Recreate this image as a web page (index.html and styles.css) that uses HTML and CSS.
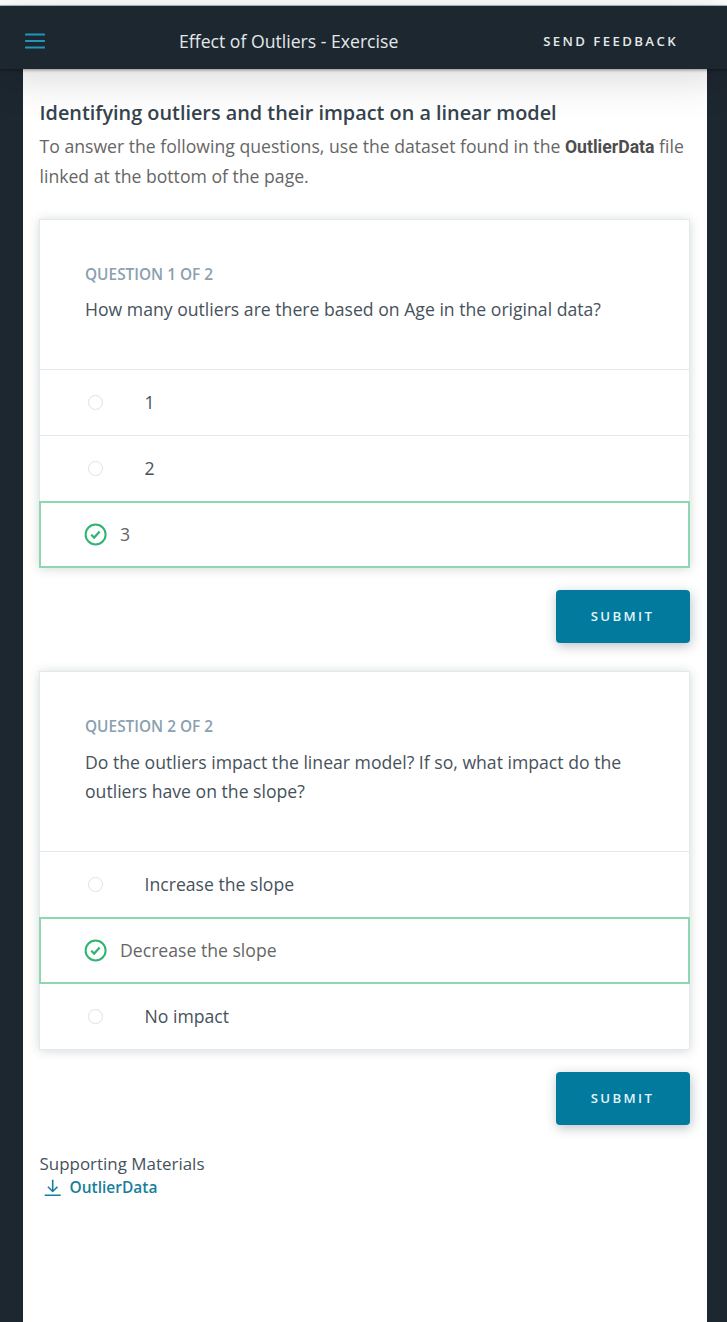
FILE: index.html
```html
<!DOCTYPE html>
<html lang="en">
<head>
<meta charset="utf-8">
<title>Effect of Outliers - Exercise</title>
<link rel="stylesheet" href="styles.css">
</head>
<body>
<header class="topbar">
  <svg class="menu" width="20" height="18" viewBox="0 0 20 18"><path d="M.8 2.5h18.4M.8 9h18.4M.8 15.5h18.4" stroke="#2495b8" stroke-width="2.2" stroke-linecap="round"/></svg>
  <h1 class="title">Effect of Outliers - Exercise</h1>
  <a class="feedback">SEND FEEDBACK</a>
</header>
<main class="page">
  <h2 class="heading">Identifying outliers and their impact on a linear model</h2>
  <p class="intro">To answer the following questions, use the dataset found in the <strong class="file">OutlierData</strong> file<br>linked at the bottom of the page.</p>

  <section class="card">
    <div class="prompt">
      <div class="count">QUESTION 1 OF 2</div>
      <p class="question">How many outliers are there based on Age in the original data?</p>
    </div>
    <div class="option"><span class="radio"></span>1</div>
    <div class="option"><span class="radio"></span>2</div>
    <div class="option correct"><svg class="check" width="24" height="24" viewBox="0 0 24 24" fill="none" stroke="#2db573"><circle cx="11.6" cy="12.5" r="10" stroke-width="2"/><path d="M7.2 12.8l3 2.8 5.4-6" stroke-width="2.2"/></svg>3</div>
  </section>
  <div class="actions"><button class="submit">SUBMIT</button></div>

  <section class="card">
    <div class="prompt long">
      <div class="count">QUESTION 2 OF 2</div>
      <p class="question">Do the outliers impact the linear model? If so, what impact do the<br>outliers have on the slope?</p>
    </div>
    <div class="option"><span class="radio"></span>Increase the slope</div>
    <div class="option correct"><svg class="check" width="24" height="24" viewBox="0 0 24 24" fill="none" stroke="#2db573"><circle cx="11.6" cy="12.5" r="10" stroke-width="2"/><path d="M7.2 12.8l3 2.8 5.4-6" stroke-width="2.2"/></svg>Decrease the slope</div>
    <div class="option"><span class="radio"></span>No impact</div>
  </section>
  <div class="actions"><button class="submit">SUBMIT</button></div>

  <div class="materials">Supporting Materials</div>
  <a class="download"><svg width="18" height="18" viewBox="0 0 18 18" fill="none" stroke="#177f9b" stroke-width="1.6"><path d="M8.7 .8v11.5M3.9 7.8l4.8 4.7 4.8-4.7M.7 16.3h16"/></svg>OutlierData</a>
</main>
</body>
</html>
```
FILE: styles.css
```css
* { box-sizing: border-box; }
body {
  margin: 0;
  padding-top: 6px;
  height: 1322px;
  overflow: hidden;
  display: flex;
  flex-direction: column;
  font-family: "Open Sans", "Noto Sans", sans-serif;
  font-size: 17.64px;
  color: #46525b;
  background: linear-gradient(#fff 5px, #b9c5c4 5px, #b9c5c4 6px, #1d2730 6px);
}
h1, h2, p { margin: 0; }
.topbar {
  position: relative;
  flex: none;
  height: 63px;
  display: flex;
  align-items: center;
  padding: 7px 49px 0 25px;
  background: #1d2730;
  box-shadow: 0 1px 3px rgba(0, 0, 0, .4), 0 8px 44px rgba(0, 0, 0, .16);
}
.menu { margin-right: 134px; }
.title {
  flex: 1;
  font-size: 17.64px;
  font-weight: 400;
  line-height: 24px;
  color: #e4e8ea;
}
.feedback {
  font-size: 13.2px;
  font-weight: 600;
  letter-spacing: 2.4px;
  padding-bottom: 1px;
  color: #e4e8ea;
}
.page {
  flex: 1;
  margin: 0 20.5px 0 23px;
  padding: 28px 16.5px 0;
  background: #fff;
}
.heading {
  font-size: 19.84px;
  font-weight: 600;
  line-height: 32px;
  color: #35434e;
  white-space: nowrap;
}
.intro {
  line-height: 29.5px;
  margin: 2.5px 0 -.5px;
  color: #666;
  white-space: nowrap;
}
.file {
  font-family: Roboto, sans-serif;
  font-weight: 700;
  color: #4d4d4d;
}
.card {
  margin: 28px 0 0 -.5px;
  border: 1px solid #e3e8ec;
  box-shadow: 0 1px 10px rgba(46, 61, 73, .2);
  background: #fff;
}
.prompt { padding: 43px 45px 45px; }
.count {
  font-size: 15.4px;
  font-weight: 600;
  line-height: 24px;
  color: #8ba0b0;
}
.question {
  margin-top: 8px;
  line-height: 29px;
  white-space: nowrap;
}
.long .question { margin-top: 9px; }
.option {
  height: 66px;
  display: flex;
  align-items: center;
  padding: 0 0 1px 48px;
  border-top: 1px solid #e3e8ea;
}
.radio {
  width: 15px;
  height: 15px;
  margin-right: 41.5px;
  border: 1.5px solid #dce2e6;
  border-radius: 50%;
}
.option.correct {
  height: 67px;
  margin: 0 -1px -1px;
  padding-left: 43px;
  border: 2px solid #8fd6b1;
  color: #666;
}
.correct + .option { border-top: 0; padding-bottom: 0; }
.check { margin-right: 12px; }
.actions {
  display: flex;
  justify-content: flex-end;
  margin-top: 22px;
}
.submit {
  width: 134px;
  height: 53px;
  border: 0;
  border-radius: 4px;
  padding: 0 1px 1px 0;
  font: 600 13.2px "Open Sans", sans-serif;
  letter-spacing: 2.35px;
  color: #e2f5f9;
  background: #027a9d;
  box-shadow: 1px 3px 12px rgba(46, 61, 73, .32);
}
.materials {
  margin-top: 27px;
  font-size: 16.95px;
  line-height: 24px;
}
.download {
  display: flex;
  align-items: center;
  gap: 8px;
  padding-left: 4px;
  line-height: 23px;
  font-size: 15.5px;
  font-weight: 600;
  color: #177f9b;
}
```
